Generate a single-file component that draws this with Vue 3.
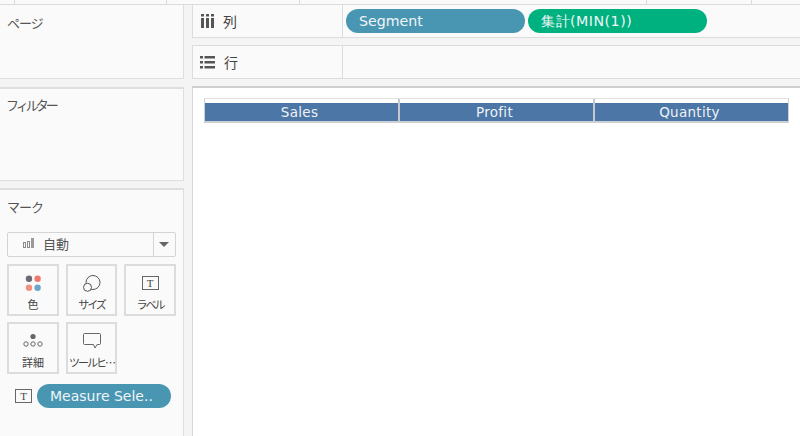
<template>
  <div class="app">
    <div class="topstrip">
      <i style="left:14px"></i><i style="left:166px"></i><i style="left:299px"></i><i style="left:646px"></i><i style="left:751px"></i>
    </div>
    <div class="main">
      <aside class="left">
        <section class="panel pages"><div class="title">ページ</div></section>
        <section class="panel filters"><div class="title squeeze">フィルター</div></section>
        <section class="panel marks">
          <div class="title">マーク</div>
          <div class="select">
            <div class="sel-main">
              <svg width="12" height="11" viewBox="0 0 12 11"><g fill="none" stroke="#8a8a8a" stroke-width="1"><rect x="0.5" y="4.5" width="2" height="5"/><rect x="4.5" y="3.5" width="2" height="6"/></g><rect x="8" y="0" width="3" height="10" fill="#9a9a9a"/></svg>
              <span>自動</span>
            </div>
            <div class="sel-arrow"></div>
          </div>
          <div class="cards">
            <div class="card" v-for="c in cards" :key="c.label">
              <div class="ic">
                <svg v-if="c.icon==='color'" width="17" height="17" viewBox="0 0 17 17"><circle cx="4" cy="3.800" r="3.200" fill="#6a6a75"/><circle cx="12.600" cy="3.800" r="3.200" fill="#f0776c"/><circle cx="4" cy="12.800" r="3.200" fill="#f0927f"/><circle cx="12.600" cy="12.800" r="3.200" fill="#6da5c8"/></svg>
                <svg v-else-if="c.icon==='size'" width="18" height="17" viewBox="0 0 18 17"><circle cx="10" cy="7.500" r="7" fill="none" stroke="#555" stroke-width="1"/><circle cx="4.500" cy="12.300" r="4" fill="#fafafa" stroke="#555" stroke-width="1"/></svg>
                <div v-else-if="c.icon==='label'" class="t-box">T</div>
                <svg v-else-if="c.icon==='detail'" width="20" height="16" viewBox="0 0 20 16"><circle cx="10" cy="3.500" r="2.600" fill="#666"/><g fill="none" stroke="#666"><circle cx="3" cy="11" r="2.200"/><circle cx="10" cy="11" r="2.200"/><circle cx="17" cy="11" r="2.200"/></g></svg>
                <svg v-else width="18" height="16" viewBox="0 0 18 16"><path d="M1.500 .5h15a1 1 0 0 1 1 1v9a1 1 0 0 1-1 1h-2.500l-2 3.500-1.500-3.500h-9a1 1 0 0 1-1-1v-9a1 1 0 0 1 1-1z" fill="none" stroke="#666"/></svg>
              </div>
              <div class="card-label" :class="{ tight: c.tight }">{{ c.label }}</div>
            </div>
          </div>
          <div class="pill-row">
            <div class="t-box">T</div>
            <div class="pill blue mark-pill">Measure Sele..</div>
          </div>
        </section>
      </aside>
      <div class="right">
        <div class="shelf first">
          <div class="shelf-head">
            <svg width="14" height="14" viewBox="0 0 14 14"><g fill="#555"><rect x="1" y="0" width="3" height="2.500"/><rect x="6" y="0" width="3" height="2.500"/><rect x="11" y="0" width="3" height="2.500"/><rect x="1" y="4" width="3" height="10"/><rect x="6" y="4" width="3" height="10"/><rect x="11" y="4" width="3" height="10"/></g></svg>
            <span>列</span>
          </div>
          <div class="shelf-body">
            <div class="pill blue seg">Segment</div>
            <div class="pill green agg">集計(MIN(1))</div>
          </div>
        </div>
        <div class="shelf second">
          <div class="shelf-head">
            <svg width="15" height="13" viewBox="0 0 15 13"><g fill="#555"><rect x="0" y="0" width="3" height="2.500"/><rect x="4.500" y="0" width="10.500" height="2.500"/><rect x="0" y="5" width="3" height="2.500"/><rect x="4.500" y="5" width="10.500" height="2.500"/><rect x="0" y="10" width="3" height="2.500"/><rect x="4.500" y="10" width="10.500" height="2.500"/></g></svg>
            <span>行</span>
          </div>
          <div class="shelf-body"></div>
        </div>
        <div class="canvas">
          <div class="table">
            <div class="th" v-for="h in headers" :key="h"><span>{{ h }}</span></div>
          </div>
        </div>
      </div>
    </div>
  </div>
</template>

<script setup>
const cards = [
  { label: '色', icon: 'color' },
  { label: 'サイズ', icon: 'size', tight: true },
  { label: 'ラベル', icon: 'label', tight: true },
  { label: '詳細', icon: 'detail' },
  { label: 'ツールヒ…', icon: 'tip', tight: true }
]
const headers = ['Sales', 'Profit', 'Quantity']
</script>

<style>
html, body { margin: 0; background: #f5f5f5; overflow: hidden; }
</style>

<style scoped>
.app {
  width: 800px; height: 436px; overflow: hidden; background: #f4f4f4;
  font-family: "Noto Sans CJK JP", "Noto Sans", sans-serif; color: #444;
  display: flex; flex-direction: column; box-sizing: border-box;
}
.topstrip { height: 5px; box-sizing: border-box; border-bottom: 1px solid #dcdcdc; position: relative; flex: none; background: #fafafa; }
.topstrip i { position: absolute; top: 0; width: 1px; height: 4px; background: #dcdcdc; }
.main { flex: 1; display: flex; gap: 8px; min-height: 0; }
.left { width: 184px; display: flex; flex-direction: column; flex: none; }
.panel { background: #fafafa; border: 1px solid #dedede; border-width: 0 1px 1px 0; box-sizing: border-box; }
.pages { height: 74px; }
.filters { height: 94px; margin-top: 8px; border-top-width: 2px; }
.marks { flex: 1; margin-top: 7px; border-top-width: 2px; border-bottom: 0; }
.title { font-size: 13px; line-height: 18px; padding: 9px 0 0 7px; color: #555; letter-spacing: -1px; }
.title.squeeze { letter-spacing: -3px; padding-top: 7px; padding-left: 6px; }
.marks .title { padding-top: 8px; }
.select {
  margin: 16px 0 0 7px; width: 169px; height: 25px; box-sizing: border-box;
  border: 1px solid #d4d4d4; border-radius: 2px; background: #fafafa; display: flex;
}
.sel-main { flex: 1; display: flex; align-items: center; padding: 0 0 2px 15px; gap: 8px; font-size: 13px; color: #555; }
.sel-arrow { width: 21px; border-left: 1px solid #d4d4d4; position: relative; }
.sel-arrow::after {
  content: ""; position: absolute; left: 5px; top: 9px; border: 5px solid transparent;
  border-top: 5px solid #666; border-bottom: 0;
}
.cards { display: grid; grid-template-columns: 52px 51px 52px; gap: 6px 7px; margin: 7px 0 0 7px; }
.card { height: 52px; box-sizing: border-box; border: 2px solid #dcdcdc; display: flex; flex-direction: column; align-items: center; }
.ic { height: 29px; display: flex; align-items: center; justify-content: center; padding-top: 5px; box-sizing: border-box; }
.card-label { font-size: 11px; line-height: 14px; margin-top: 2px; color: #444; white-space: nowrap; }
.card-label.tight { letter-spacing: -2px; }
.t-box {
  width: 15px; height: 12px; border: 1px solid #666; font-family: "Liberation Serif", serif;
  font-size: 11px; line-height: 12px; text-align: center; color: #444; flex: none; box-sizing: content-box;
}
.pill-row { display: flex; align-items: center; gap: 5px; margin: 10px 0 0 15px; }
.pill { border-radius: 12px; color: #f0f5f8; height: 24px; line-height: 24px; box-sizing: border-box; font-family: "DejaVu Sans", sans-serif; font-size: 14.200px; white-space: nowrap; }
.blue { background: #4996b2; }
.green { background: #00b180; }
.mark-pill { width: 134px; padding-left: 13px; font-size: 14px; }
.right { flex: 1; display: flex; flex-direction: column; min-width: 0; }
.shelf { flex: none; display: flex; background: #fafafa; border: 1px solid #dcdcdc; border-width: 0 0 1px 1px; box-sizing: border-box; margin-bottom: 7px; }
.shelf.first { height: 33px; }
.shelf.second { height: 34px; border-top-width: 1px; }
.shelf-head { width: 150px; flex: none; display: flex; align-items: center; gap: 9px; padding-left: 7px; box-sizing: border-box; border-right: 1px solid #dcdcdc; font-size: 14px; color: #444; }
.shelf-body { flex: 1; display: flex; align-items: center; gap: 3px; padding-left: 3px; }
.seg { width: 179px; padding-left: 13px; }
.agg { width: 179px; padding-left: 13px; letter-spacing: 0.5px; }
.canvas { flex: 1; background: #fff; border-top: 2px solid #cfcfcf; border-left: 1px solid #d8d8d8; padding: 10px 9px 0 11px; min-height: 0; }
.table { display: flex; width: 585px; height: 25px; box-sizing: border-box; border: 1px solid #d0d0d0; border-top: 1px solid #e2e2e2; background: #fff; }
.th { flex: 1; padding-top: 4px; border-right: 2px solid #c4c8ce; border-bottom: 1px solid #c8ced6; }
.th span { display: block; height: 18px; padding-right: 4px; background: #4c76a6; color: #eef2f7; text-align: center; font-family: "DejaVu Sans", sans-serif; font-size: 13.500px; line-height: 18px; letter-spacing: 0.3px; }
.th:last-child { border-right: 0; }
</style>
